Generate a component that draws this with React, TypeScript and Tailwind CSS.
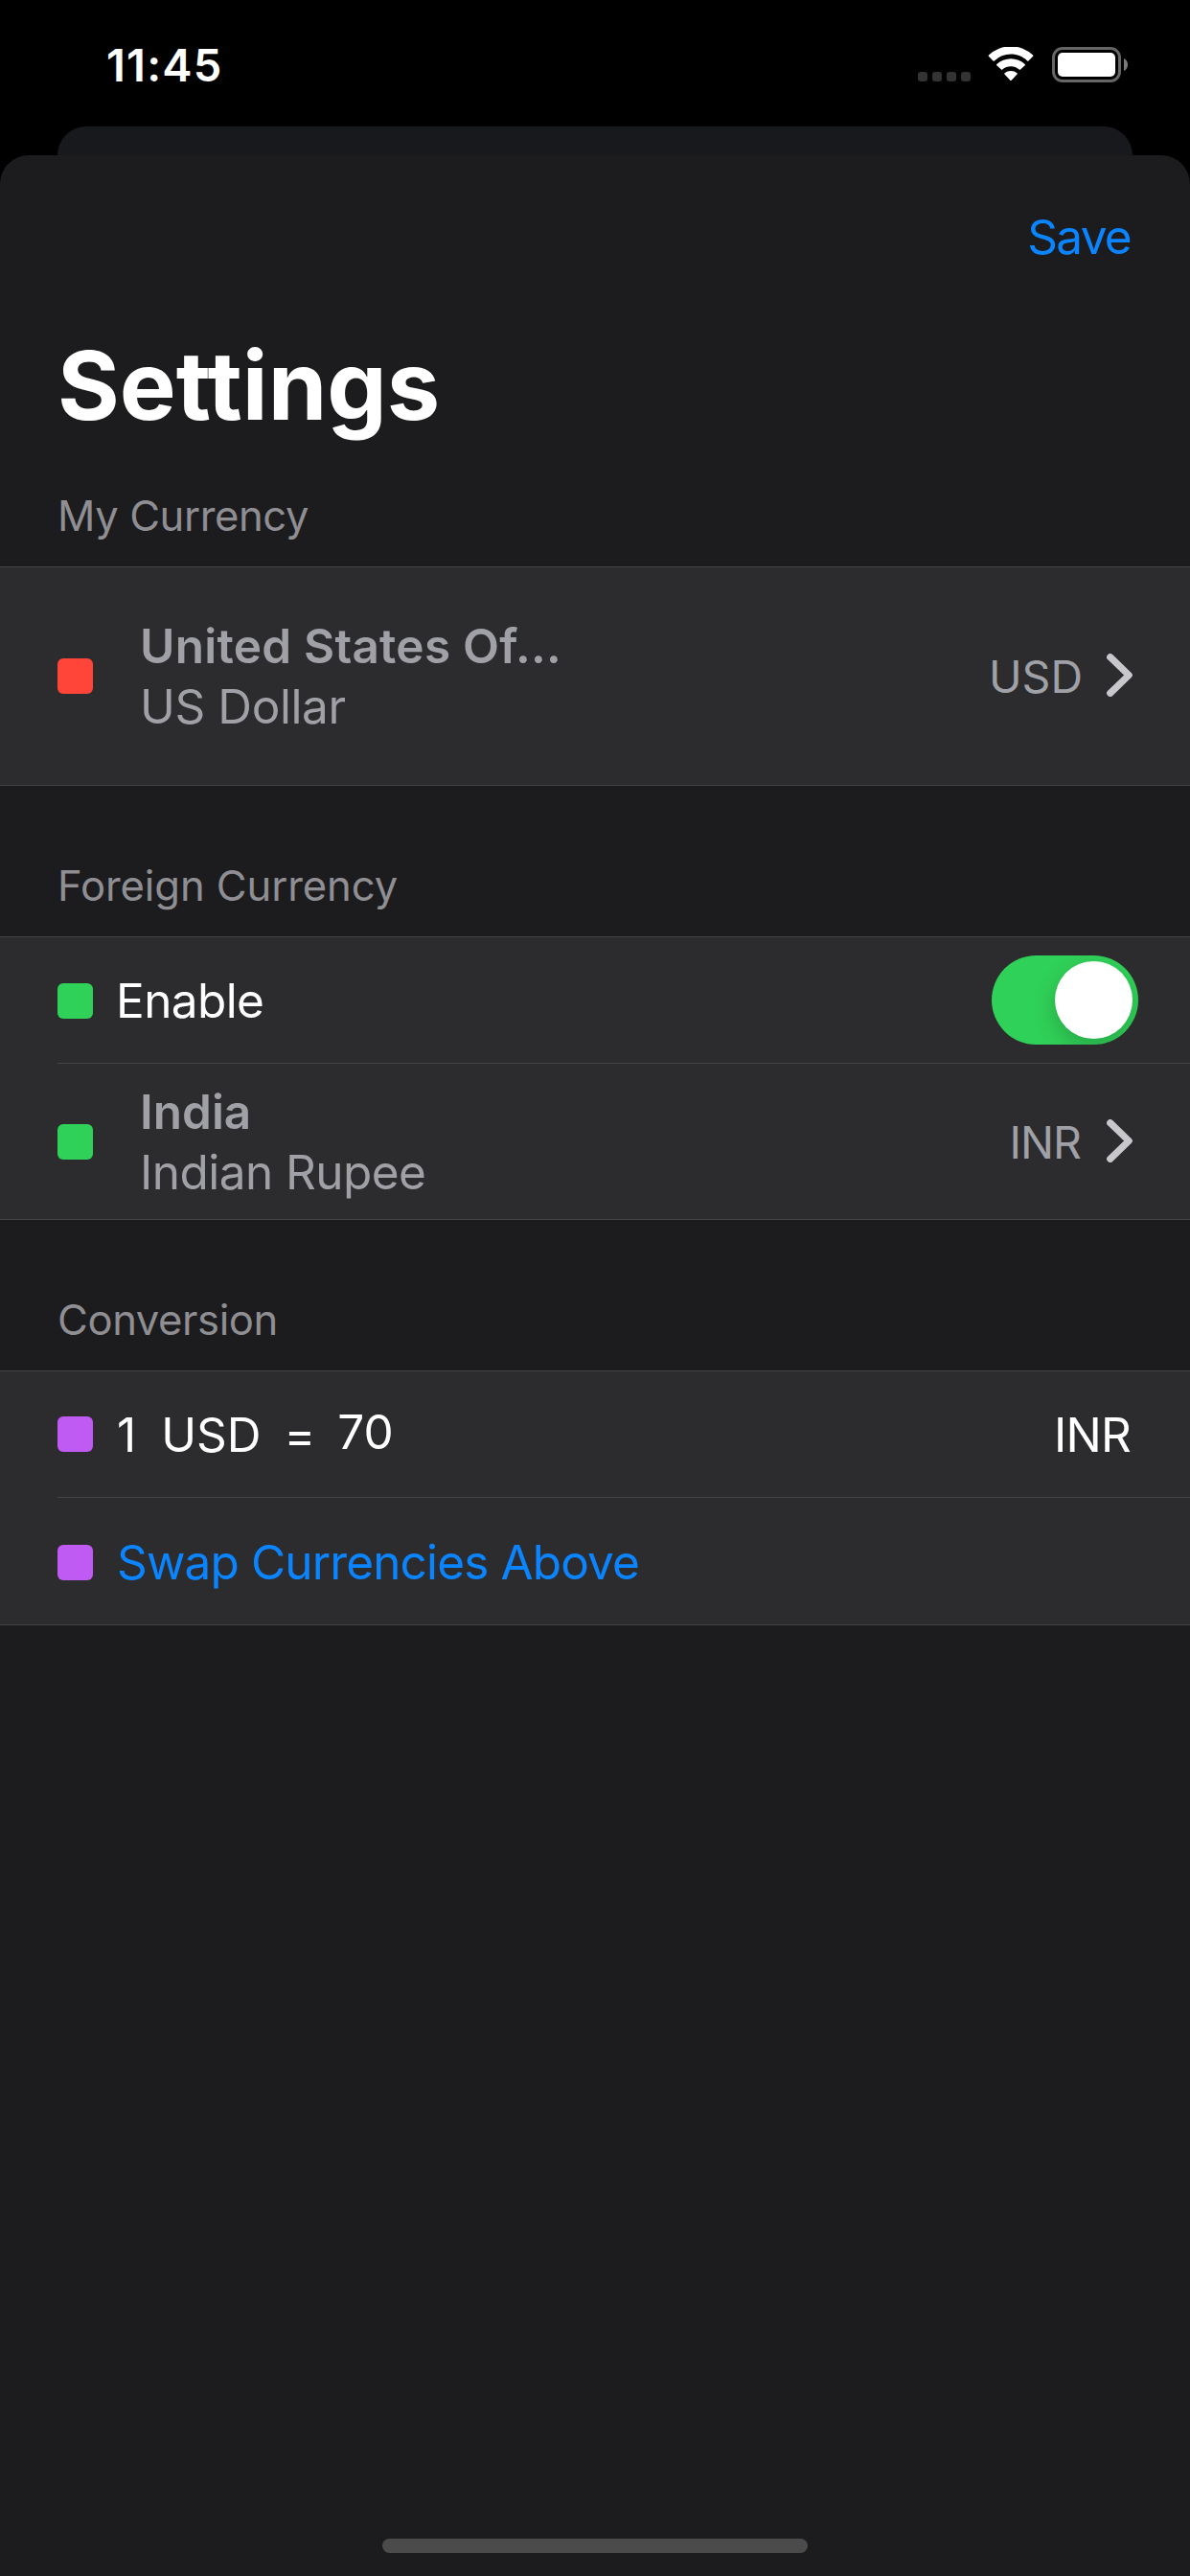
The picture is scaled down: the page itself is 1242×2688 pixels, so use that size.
import { type ReactNode } from "react";

function Chevron() {
  return (
    <svg width="27" height="45" viewBox="0 0 27 45" fill="none" className="mb-[2px] shrink-0">
      <path d="M3.7 3.7 23.2 22.5 3.7 41.3" stroke="#c7c7cc" strokeWidth="7.2" strokeLinecap="round" strokeLinejoin="round" />
    </svg>
  );
}

function Wifi() {
  return (
    <svg width="48" height="36" viewBox="0 0 48 36" fill="#fff" className="shrink-0">
      <path d="M24 7.6c6.6 0 12.7 2.6 17.2 6.9.4.3.9.3 1.3 0l4.6-4.7c.4-.4.4-1 0-1.3A33.5 33.5 0 0 0 .9 8.5c-.4.3-.4.9 0 1.3l4.600 4.700c.4.3.9.3 1.300 0A24.900 24.900 0 0 1 24 7.600Z" />
      <path d="M24 20.300c3.300 0 6.300 1.200 8.700 3.300.4.3.9.300 1.300 0l4.700-4.300c.4-.4.4-1 0-1.300a21.500 21.500 0 0 0-29.400 0c-.4.3-.4.9 0 1.300l4.700 4.300c.4.3.9.3 1.300 0a13 13 0 0 1 8.700-3.300Z" />
      <path d="M30.500 28.500c.4-.4.4-.9 0-1.200a10 10 0 0 0-13 0c-.4.3-.4.8 0 1.200l5.800 6.300c.4.4 1 .4 1.400 0Z" />
    </svg>
  );
}

function Battery() {
  return (
    <svg width="79" height="37" viewBox="0 0 79 37" className="shrink-0">
      <rect x="1.5" y="1.5" width="69" height="34" rx="9.5" fill="none" stroke="#666" strokeWidth="3" />
      <rect x="6" y="6" width="60" height="25" rx="5" fill="#fff" />
      <path d="M75 12v13c2.4-1 4-3.5 4-6.5s-1.6-5.5-4-6.5Z" fill="#7a7a7a" />
    </svg>
  );
}

function SectionTitle({ children, className }: { children: ReactNode; className: string }) {
  return <h2 className={`pl-[60px] text-[43.6px] leading-[61px] text-[#8e8e93] ${className}`}>{children}</h2>;
}

function Square({ className }: { className: string }) {
  return <div className={`size-[37px] shrink-0 rounded-[6px] ${className}`} />;
}

function CurrencyRow({ color, name, unit, code, className }: { color: string; name: ReactNode; unit: ReactNode; code: ReactNode; className: string }) {
  return (
    <div className={`flex items-center pr-[60px] pl-[60px] ${className}`}>
      <Square className={color} />
      <div className="ml-[49px] flex-1 text-[49.5px] leading-[60px] text-[#a0a0a7]">
        <div className="mb-[3px] font-semibold">{name}</div>
        <div>{unit}</div>
      </div>
      <span className="mt-px mr-[25px] text-[46.5px] leading-[58px] text-[#a0a0a7]">{code}</span>
      <Chevron />
    </div>
  );
}

export default function App() {
  return (
    <div className="flex h-[2688px] w-[1242px] flex-col overflow-hidden bg-black font-['Inter',sans-serif]">
      <header className="flex h-[132px] shrink-0 items-start pl-[111px] pr-[65px]">
        <span className="mt-[38px] text-[47px] leading-[59px] font-semibold tracking-[1.2px] text-white">11:45</span>
        <div className="mt-[49px] ml-auto flex items-start">
          <div className="mt-[26px] mr-[18px] flex gap-[5px]">
            {[0, 1, 2, 3].map((i) => <div key={i} className="size-[10px] rounded-[3px] bg-[#333]" />)}
          </div>
          <Wifi />
          <div className="ml-[19px]"><Battery /></div>
        </div>
      </header>
      <div className="mx-[60px] h-[60px] shrink-0 rounded-t-[30px] bg-[#18191c]" />
      <main className="-mt-[30px] flex flex-1 flex-col rounded-t-[30px] bg-[#1c1c1e]">
        <div className="mt-[55px] flex h-[60px] justify-end pr-[62px] text-[49.5px] leading-[60px] tracking-[-1.7px] text-[#0a84ff]">Save</div>
        <h1 className="mt-[65px] pl-[60px] text-[99px] leading-[120px] font-bold text-white">Settings</h1>
        <SectionTitle className="mt-[46px] tracking-[-0.4px]">My Currency</SectionTitle>
        <section className="mt-[22px] border-y border-[#434346] bg-[#2c2c2e]">
          <CurrencyRow
            className="h-[227px]"
            color="bg-[#ff453a]"
            name={<span className="tracking-[0.25px]">United States Of...</span>}
            unit={<span className="tracking-[-0.4px]">US Dollar</span>}
            code="USD"
          />
        </section>
        <SectionTitle className="mt-[74px] tracking-[-0.1px]">Foreign Currency</SectionTitle>
        <section className="mt-[22px] border-y border-[#434346] bg-[#2c2c2e]">
          <div className="flex h-[131px] items-center pt-px pr-[54px] pl-[60px]">
            <Square className="mt-px bg-[#30d158]" />
            <span className="ml-[24px] flex-1 text-[49.5px] leading-[60px] tracking-[-0.6px] text-white">Enable</span>
            <div className="mb-px flex h-[93px] w-[153px] items-center justify-end overflow-hidden rounded-full bg-[#30d158] pr-[6px]">
              <div className="size-[81px] rounded-full bg-white shadow-[0_9px_24px_rgba(0,0,0,0.2)]" />
            </div>
          </div>
          <div className="ml-[60px] h-px bg-[#434346]" />
          <CurrencyRow
            className="h-[162px] pt-px"
            color="bg-[#30d158]"
            name="India"
            unit={<span className="tracking-[-0.55px]">Indian Rupee</span>}
            code={<span className="mr-[2px] tracking-[-1px]">INR</span>}
          />
        </section>
        <SectionTitle className="mt-[74px] tracking-[-0.42px]">Conversion</SectionTitle>
        <section className="mt-[22px] border-y border-[#434346] bg-[#2c2c2e]">
          <div className="flex h-[131px] items-center pt-px pr-[62px] pl-[60px] text-[49.5px] leading-[60px] text-white">
            <Square className="mb-px bg-[#bf5af2]" />
            <span className="ml-[25px]">1</span>
            <span className="ml-[26px]">USD</span>
            <span className="ml-[24px]">=</span>
            <span className="mb-[6px] ml-[23px] flex-1">70</span>
            <span className="tracking-[-0.8px]">INR</span>
          </div>
          <div className="ml-[60px] h-px bg-[#434346]" />
          <div className="flex h-[132px] items-center pt-[2px] pl-[60px] text-[49.5px] leading-[60px] text-[#0a84ff]">
            <Square className="mt-px bg-[#bf5af2]" />
            <span className="ml-[25px] tracking-[-0.86px]">Swap Currencies Above</span>
          </div>
        </section>
        <div className="mx-auto mt-auto mb-[24px] h-[15px] w-[444px] rounded-full bg-[#4b4b4b]" />
      </main>
    </div>
  );
}
